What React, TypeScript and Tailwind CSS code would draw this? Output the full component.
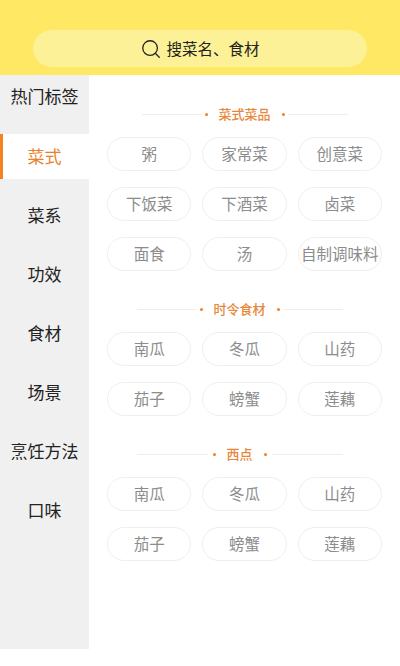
import { Search } from "lucide-react";

const font = { fontFamily: '"Noto Sans CJK SC", "Noto Sans", sans-serif' };

const navItems = ["菜系", "功效", "食材", "场景", "烹饪方法", "口味"];

const sections = [
  {
    title: "菜式菜品",
    shift: "",
    dotLeft: "ml-[3px]",
    dotRight: "mr-[3px]",
    tags: ["粥", "家常菜", "创意菜", "下饭菜", "下酒菜", "卤菜", "面食", "汤", "自制调味料"],
  },
  {
    title: "时令食材",
    shift: "pr-[10px]",
    dotLeft: "ml-[3px]",
    dotRight: "mr-[3px]",
    tags: ["南瓜", "冬瓜", "山药", "茄子", "螃蟹", "莲藕"],
  },
  {
    title: "西点",
    shift: "pr-[10px]",
    dotLeft: "ml-[5px]",
    dotRight: "mr-[5px]",
    tags: ["南瓜", "冬瓜", "山药", "茄子", "螃蟹", "莲藕"],
  },
];

function SectionTitle({
  title,
  shift,
  dotLeft,
  dotRight,
}: {
  title: string;
  shift: string;
  dotLeft: string;
  dotRight: string;
}) {
  return (
    <div className={`flex h-[20px] justify-center ${shift}`}>
      <div className="flex w-[206px] items-center">
        <div className="h-px flex-1 bg-[#eeeeee]" />
        <div className={`h-[3px] w-[3px] rounded-full bg-[#e8812c] ${dotLeft}`} />
        <span className="mx-[11px] text-[13px] leading-[20px] font-medium text-[#e8873a]">{title}</span>
        <div className={`h-[3px] w-[3px] rounded-full bg-[#e8812c] ${dotRight}`} />
        <div className="h-px flex-1 bg-[#eeeeee]" />
      </div>
    </div>
  );
}

export default function App() {
  return (
    <div className="h-[666px] w-[400px] overflow-hidden bg-white" style={font}>
      {/* Search header */}
      <div className="flex h-[75px] items-start justify-center bg-[#ffe863] pt-[30px]">
        <div className="flex h-[37px] w-[334px] items-center justify-center gap-[4px] rounded-full bg-[#fdf197]">
          <Search className="h-[22px] w-[22px] text-[#222222]" strokeWidth={1.4} />
          <span className="text-[15.5px] text-[#222222]">搜菜名、食材</span>
        </div>
      </div>

      <div className="flex">
        {/* Category sidebar */}
        <div className="h-[574px] w-[89px] shrink-0 bg-[#f0f0f0]">
          <div className="flex h-[59px] items-start justify-center pt-[9px] text-[17px] leading-[24px] text-[#222222]">
            热门标签
          </div>
          <div className="flex h-[45px] items-center justify-center border-l-[3px] border-[#f5821f] bg-white pr-[3px] pb-[2px] text-[17px] text-[#e8812c]">
            菜式
          </div>
          <div className="mt-[14px] flex flex-col gap-[14px]">
            {navItems.map((item) => (
              <div key={item} className="flex h-[45px] items-center justify-center pb-[2px] text-[17px] text-[#222222]">
                {item}
              </div>
            ))}
          </div>
        </div>

        {/* Tag sections */}
        <div className="flex-1 pl-[18px] pr-[18px] pt-[29px]">
          {sections.map((section) => (
            <div key={section.title} className="mb-[28px]">
              <SectionTitle
                title={section.title}
                shift={section.shift}
                dotLeft={section.dotLeft}
                dotRight={section.dotRight}
              />
              <div className="mt-[13px] grid grid-cols-3 gap-x-[11px] gap-y-[16px]">
                {section.tags.map((tag, i) => (
                  <div
                    key={tag + i}
                    className="flex h-[34px] items-center justify-center rounded-full border border-[#efefef] pb-[1px] text-[15.5px] whitespace-nowrap text-[#8c8c8c]"
                  >
                    {tag}
                  </div>
                ))}
              </div>
            </div>
          ))}
        </div>
      </div>
    </div>
  );
}
